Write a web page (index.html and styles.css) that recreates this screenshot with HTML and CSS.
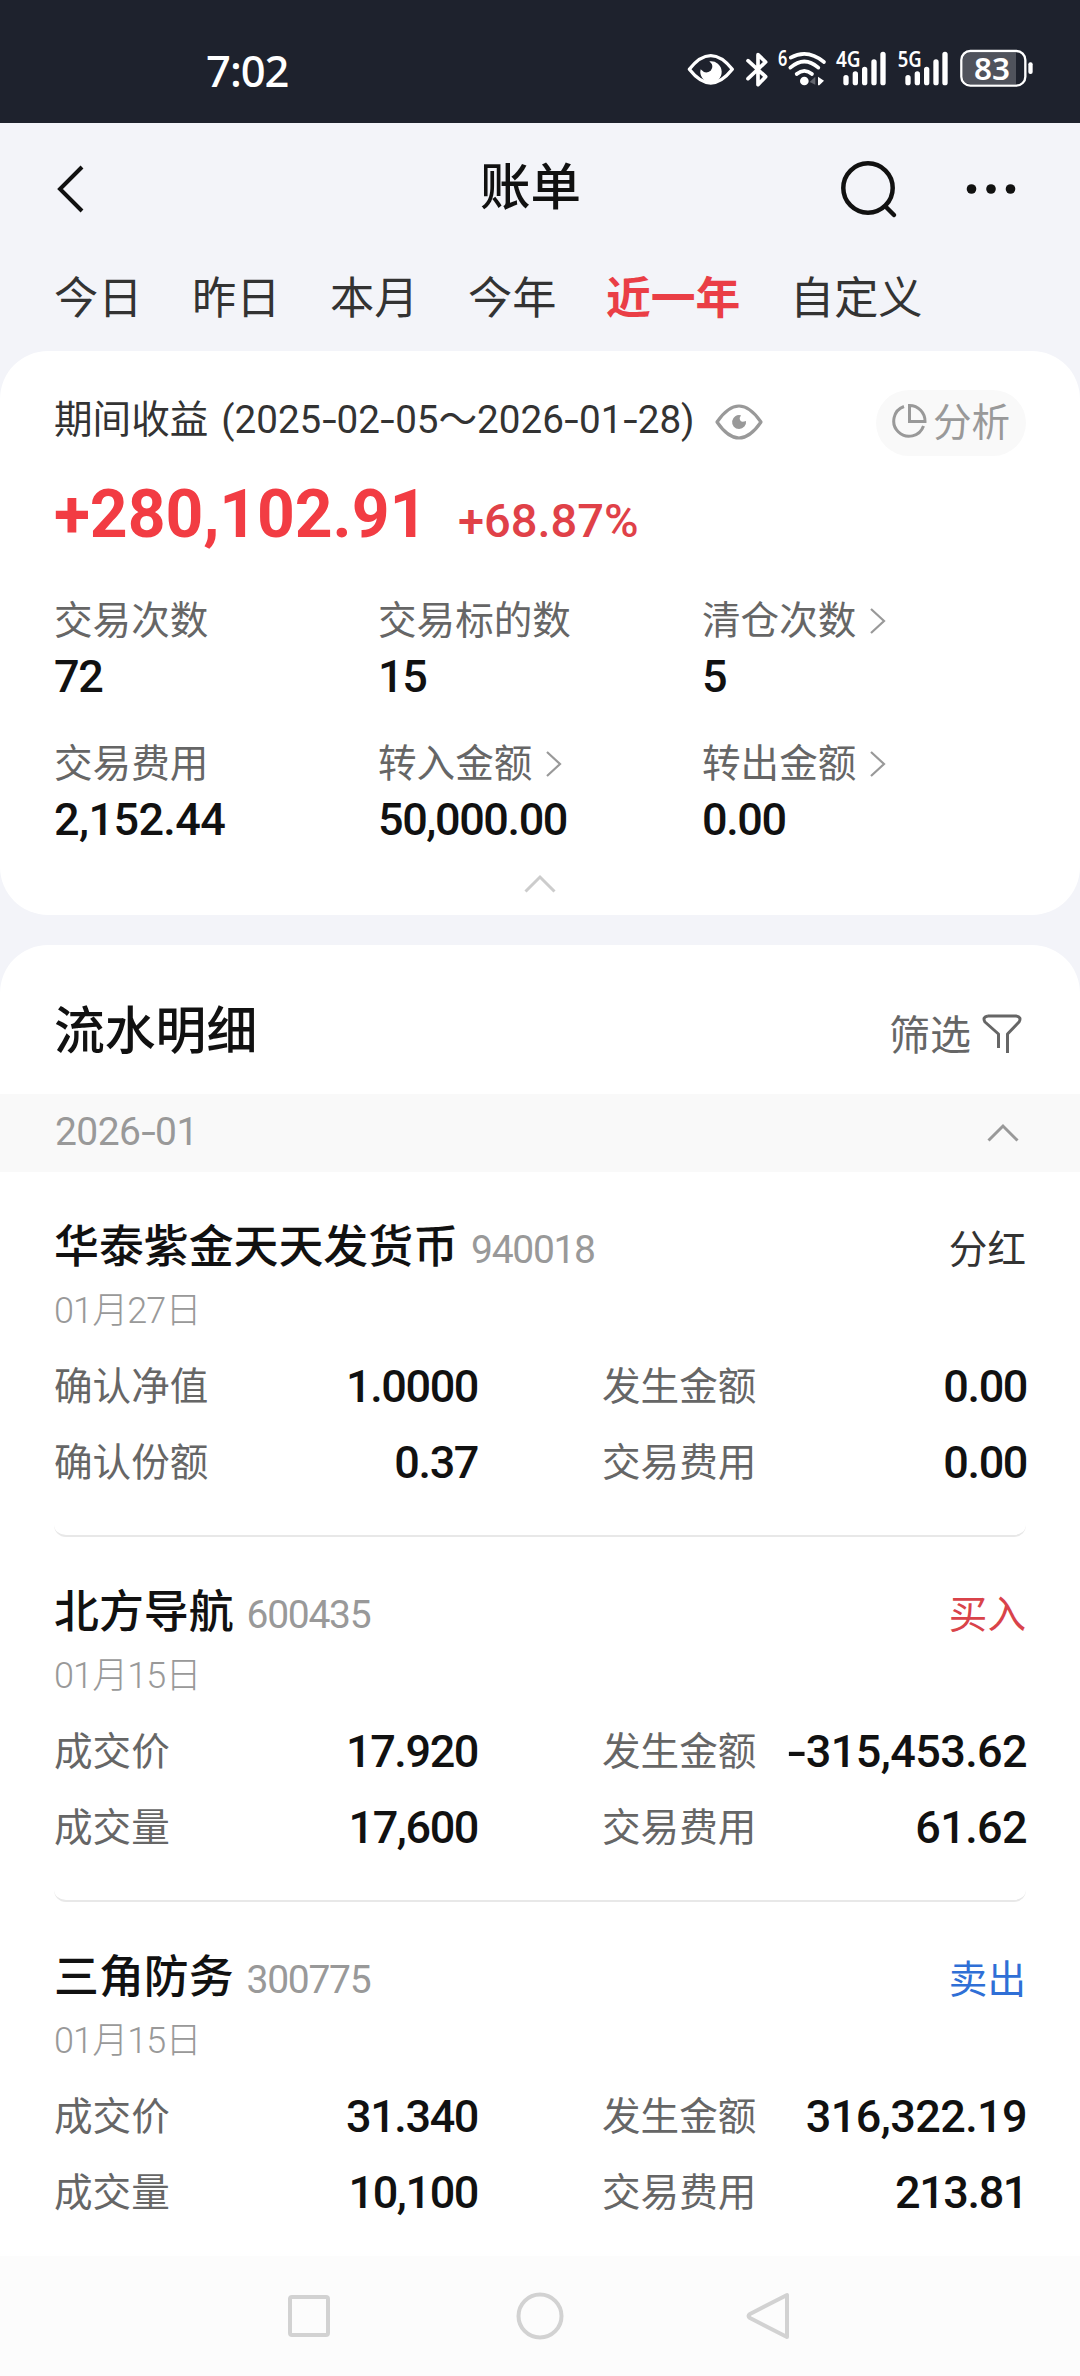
FILE: index.html
```html
<!DOCTYPE html>
<html lang="zh-CN">
<head>
    <meta charset="UTF-8">
    <meta name="viewport" content="width=device-width, initial-scale=1.0">
    <title>账单</title>
    <link rel="stylesheet" href="styles.css">
</head>
<body>
    <div class="status-bar">
        <span class="time">7:02</span>
        <svg class="status-icons" viewBox="0 0 1200 240" fill="none" stroke="#fff" stroke-linecap="round" stroke-linejoin="round">
            <path d="M88 118 Q152 36 217 118 Q152 200 88 118 Z" stroke-width="10"/>
            <path d="M148 94 A32 32 0 1 1 122 118 Q136 134 152 122 Q164 108 148 94 Z" fill="#fff" stroke="none"/>
            <path d="M264 92 L317 140 L294 164 V74 L317 96 L264 146" stroke-width="11"/>
            <text x="354" y="109" class="svg-text" font-size="62" textLength="28" lengthAdjust="spacingAndGlyphs">6</text>
            <path d="M392 83 Q442 55 492 96 M391 113 Q433 76 475 113 M410 132 Q433 113 456 132" stroke-width="11"/>
            <circle cx="433" cy="153" r="13" fill="#fff" stroke="none"/>
            <path d="M449 156 L466 140 V164 Z" fill="#62656d" stroke="none"/>
            <path d="M474 140 L492 152 L478 166 H474 Z" fill="#fff" stroke="none"/>
            <text x="528" y="112" class="svg-text" font-size="62" textLength="74" lengthAdjust="spacingAndGlyphs">4G</text>
            <path d="M558 143 V158 M586 132 V158 M614 118 V158 M642 96 V158 M669 73 V158" stroke-width="16"/>
            <text x="713" y="112" class="svg-text" font-size="62" textLength="72" lengthAdjust="spacingAndGlyphs">5G</text>
            <path d="M744 143 V158 M772 132 V158 M800 118 V158 M828 96 V158 M855 73 V158" stroke-width="16"/>
            <path d="M932 68 H1068 V162 H932 Q908 162 908 138 V92 Q908 68 932 68 Z" fill="#50535c" stroke="none"/>
            <rect x="904" y="63" width="192" height="104" rx="27" stroke-width="7"/>
            <rect x="1105" y="97" width="13" height="35" rx="6" fill="#fff" stroke="none"/>
            <text x="942" y="149" class="svg-text" font-size="94" textLength="108" lengthAdjust="spacingAndGlyphs">83</text>
        </svg>
    </div>

    <header class="header">
        <svg class="icon-back" viewBox="0 0 30 50"><path d="M27 3 L5 25 L27 47"/></svg>
        <h1>账单</h1>
        <div class="header-actions">
            <svg class="icon-search" viewBox="0 0 60 60"><circle cx="29" cy="29" r="24.7"/><path d="M47 48 L55 56"/></svg>
            <svg class="icon-more" viewBox="0 0 54 12"><circle cx="7.5" cy="6" r="4.8"/><circle cx="27" cy="6" r="4.8"/><circle cx="46.5" cy="6" r="4.8"/></svg>
        </div>
    </header>

    <nav class="tabs">
        <span>今日</span>
        <span>昨日</span>
        <span>本月</span>
        <span>今年</span>
        <span class="active">近一年</span>
        <span>自定义</span>
    </nav>

    <section class="card summary">
        <div class="period">
            <span>期间收益</span>
            <span class="range">(2025<i>-</i>02<i>-</i>05～2026<i>-</i>01<i>-</i>28)</span>
            <svg class="icon-eye" viewBox="0 0 48 36"><path d="M2 18 Q24 -14 46 18 Q24 50 2 18 Z"/><path class="pupil" d="M26 11.3 A7 7 0 1 0 31 17 Q26 19 25 16 Q24 14 26 11.3 Z"/></svg>
            <span class="analyse">
                <svg viewBox="0 0 36 36"><path d="M13 3.5 A15.3 15.3 0 1 0 32.5 23"/><path d="M18.5 2.5 V18.5 H34 A15.5 15.5 0 0 0 18.5 2.5 Z"/></svg>
                <span>分析</span>
            </span>
        </div>
        <div class="profit">
            <span class="amount">+280,102.91</span>
            <span class="rate">+68.87%</span>
        </div>
        <div class="stats">
            <div class="stat">
                <div class="label">交易次数</div>
                <div class="num">72</div>
            </div>
            <div class="stat">
                <div class="label">交易标的数</div>
                <div class="num">15</div>
            </div>
            <div class="stat">
                <div class="label">清仓次数<svg class="arrow" viewBox="0 0 18 28"><path d="M2 2 L15 14 L2 26"/></svg></div>
                <div class="num">5</div>
            </div>
            <div class="stat">
                <div class="label">交易费用</div>
                <div class="num wide">2,152.44</div>
            </div>
            <div class="stat">
                <div class="label">转入金额<svg class="arrow" viewBox="0 0 18 28"><path d="M2 2 L15 14 L2 26"/></svg></div>
                <div class="num">50,000.00</div>
            </div>
            <div class="stat">
                <div class="label">转出金额<svg class="arrow" viewBox="0 0 18 28"><path d="M2 2 L15 14 L2 26"/></svg></div>
                <div class="num">0.00</div>
            </div>
        </div>
        <svg class="collapse" viewBox="0 0 34 20"><path d="M2.5 17.5 L17 3 L31.5 17.5"/></svg>
    </section>

    <section class="card details">
        <div class="details-head">
            <h2>流水明细</h2>
            <span class="filter">筛选<svg viewBox="0 0 40 42"><path d="M6 3 H34 Q40 4 37 9 L25.5 21 V40 M16.5 35 V21 L3 9 Q0 4 6 3"/></svg></span>
        </div>
        <div class="month">
            <span class="month-text">2026<i>-</i>01</span>
            <svg class="month-arrow" viewBox="0 0 34 20"><path d="M2.5 17.5 L17 3 L31.5 17.5"/></svg>
        </div>

        <article class="trade">
            <div class="trade-head">
                <span class="name">华泰紫金天天发货币</span>
                <span class="code">940018</span>
                <span class="type">分红</span>
            </div>
            <div class="date">01月27日</div>
            <div class="rows">
                <span class="label">确认净值</span><span class="num">1.0000</span>
                <span class="label">发生金额</span><span class="num">0.00</span>
                <span class="label">确认份额</span><span class="num">0.37</span>
                <span class="label">交易费用</span><span class="num">0.00</span>
            </div>
        </article>

        <article class="trade">
            <div class="trade-head">
                <span class="name">北方导航</span>
                <span class="code">600435</span>
                <span class="type buy">买入</span>
            </div>
            <div class="date">01月15日</div>
            <div class="rows">
                <span class="label">成交价</span><span class="num">17.920</span>
                <span class="label">发生金额</span><span class="num wide"><i>-</i>315,453.62</span>
                <span class="label">成交量</span><span class="num">17,600</span>
                <span class="label">交易费用</span><span class="num wide">61.62</span>
            </div>
        </article>

        <article class="trade">
            <div class="trade-head">
                <span class="name">三角防务</span>
                <span class="code">300775</span>
                <span class="type sell">卖出</span>
            </div>
            <div class="date">01月15日</div>
            <div class="rows">
                <span class="label">成交价</span><span class="num">31.340</span>
                <span class="label">发生金额</span><span class="num wide">316,322.19</span>
                <span class="label">成交量</span><span class="num">10,100</span>
                <span class="label">交易费用</span><span class="num">213.81</span>
            </div>
        </article>
    </section>

    <footer class="nav-bar">
        <svg viewBox="0 0 50 50"><rect x="6" y="6" width="38" height="38" rx="2"/></svg>
        <svg viewBox="0 0 50 50"><circle cx="25" cy="25" r="21.5"/></svg>
        <svg viewBox="0 0 50 50"><path d="M42 4 V46 L5 27 Q2 25 5 23 Z"/></svg>
    </footer>
</body>
</html>
```
FILE: styles.css
```css
* { box-sizing: border-box; }
body {
    margin: 0;
    width: 1080px;
    height: 2376px;
    display: flex;
    flex-direction: column;
    overflow: hidden;
    background-color: #f3f4f9;
    color: #111;
    font-family: Roboto, "Noto Sans CJK SC", sans-serif;
}
svg { display: block; flex: none; fill: none; }
i { font-style: normal; display: inline-block; transform: scaleX(1.35); margin: 0 2.3px; }

/* status bar */
.status-bar {
    height: 123px;
    flex: none;
    display: flex;
    justify-content: space-between;
    padding: 30px 20px 0 206px;
    background-color: #1e222d;
}
.time { color: #fff; font-family: "Noto Sans", sans-serif; font-size: 43.5px; font-weight: 500; line-height: 80px; letter-spacing: -1px; }
.status-icons { width: 400px; height: 80px; }
.svg-text { fill: #fff; stroke: none; font-family: "Noto Sans", sans-serif; font-weight: 600; }

/* header */
.header {
    height: 132px;
    flex: none;
    display: flex;
    align-items: center;
    padding: 0 62px 0 55px;
}
h1 { margin: 0 0 2px 395px; font-size: 50.5px; font-weight: 500; line-height: 70px; }
.icon-back { width: 30px; height: 50px; stroke: #111; stroke-width: 4; }
.icon-search { width: 60px; height: 60px; stroke: #111; stroke-width: 4.5; stroke-linecap: round; }
.icon-more { width: 54px; height: 12px; fill: #111; }
.header-actions { margin-left: auto; display: flex; align-items: center; gap: 65px; }

.tabs {
    height: 96px;
    flex: none;
    display: flex;
    gap: 49.6px;
    padding: 10px 54px 0;
    font-size: 44.2px;
    line-height: 68px;
    color: #333;
    white-space: nowrap;
}
.tabs .active { font-size: 44.8px; font-weight: 700; color: #ea3e46; }

.card { background-color: #fff; border-radius: 48px; flex: none; }

/* summary */
.summary { height: 564px; padding: 39px 54px 0 54px; }
.period { display: flex; align-items: center; height: 65px; font-size: 38.6px; color: #333; }
.period > span:first-child { margin-top: -13px; }
.range { margin: -13px 0 0 13px; white-space: nowrap; }
.icon-eye { width: 48px; height: 36px; margin: -2px 0 0 20px; stroke: #999; stroke-width: 3.2; stroke-linejoin: round; }
.icon-eye .pupil { fill: #999; stroke: none; }
.analyse {
    margin-left: auto;
    width: 150px;
    height: 66px;
    padding-left: 15px;
    display: flex;
    align-items: center;
    gap: 6px;
    border-radius: 33px;
    background-color: #f9f9f9;
    color: #999;
}
.analyse svg { width: 36px; height: 36px; margin-top: -3px; stroke: #999; stroke-width: 3; }
.analyse span { margin-top: -8px; }
.profit { display: flex; align-items: baseline; height: 138px; padding-top: 2px; line-height: 116px; }
.amount { width: 404px; font-size: 66px; font-weight: 700; color: #f23c43; letter-spacing: -0.1px; }
.rate { font-size: 47px; font-weight: 500; color: #e04148; }
.stats { display: grid; grid-template-columns: 324px 324px 1fr; grid-auto-rows: 143px; }
.label { display: flex; align-items: center; font-size: 38.6px; line-height: 56px; color: #666; white-space: nowrap; }
.num { font-size: 45px; font-weight: 500; line-height: 56px; letter-spacing: -1.4px; }
.num.wide { letter-spacing: -0.6px; }
.arrow { width: 18px; height: 28px; margin-left: 13px; stroke: #999; stroke-width: 2.2; }
.collapse { width: 34px; height: 20px; margin: -5px auto 0; stroke: #ccc; stroke-width: 3; }

/* details */
.details { margin-top: 30px; height: 1311px; border-radius: 48px 48px 0 0; }
.details-head { display: flex; align-items: center; justify-content: space-between; height: 149px; padding: 25px 58px 0 54px; }
h2 { margin: 0; font-size: 50.8px; font-weight: 500; line-height: 70px; }
.filter { display: flex; align-items: center; gap: 11px; font-size: 41px; color: #666; }
.filter svg { width: 40px; height: 42px; margin-top: 3px; stroke: #666; stroke-width: 3; stroke-linejoin: round; }
.month { display: flex; align-items: center; justify-content: space-between; height: 78px; padding: 0 60px 0 55px; background-color: #f9f9f9; color: #999; font-size: 39px; }
.month-text { letter-spacing: -0.6px; margin-top: -2px; }
.month-arrow { width: 34px; height: 20px; stroke: #999; stroke-width: 3; }

.trade { height: 365px; margin: 0 54px; padding-top: 43px; border-bottom: 2px solid #e8e8e8; border-radius: 12px; }
.trade:last-child { border-bottom: none; }
.trade-head { display: flex; align-items: baseline; height: 66px; line-height: 66px; }
.name { font-size: 44.9px; font-weight: 500; }
.code { margin-left: 13px; font-size: 39px; color: #999; letter-spacing: -1.3px; }
.type { margin-left: auto; font-size: 38.6px; color: #333; }
.type.buy { color: #d9434a; }
.type.sell { color: #2f6fd6; }
.date { font-size: 36px; font-weight: 300; line-height: 60px; color: #999; letter-spacing: -0.9px; }
.rows { display: grid; grid-template-columns: 200px 223px 1fr 250px; grid-auto-rows: 76px; align-items: center; margin-top: 8px; }
.rows .num { text-align: right; margin-right: -1px; white-space: nowrap; }
.rows .label:nth-child(4n+3) { padding-left: 125px; }

.nav-bar { flex: none; height: 120px; display: flex; gap: 180.5px; padding: 35px 0 0 284px; background-color: #fcfcfc; }
.nav-bar svg { width: 50px; height: 50px; stroke: #d2d2d2; stroke-width: 4; stroke-linejoin: round; }
```
